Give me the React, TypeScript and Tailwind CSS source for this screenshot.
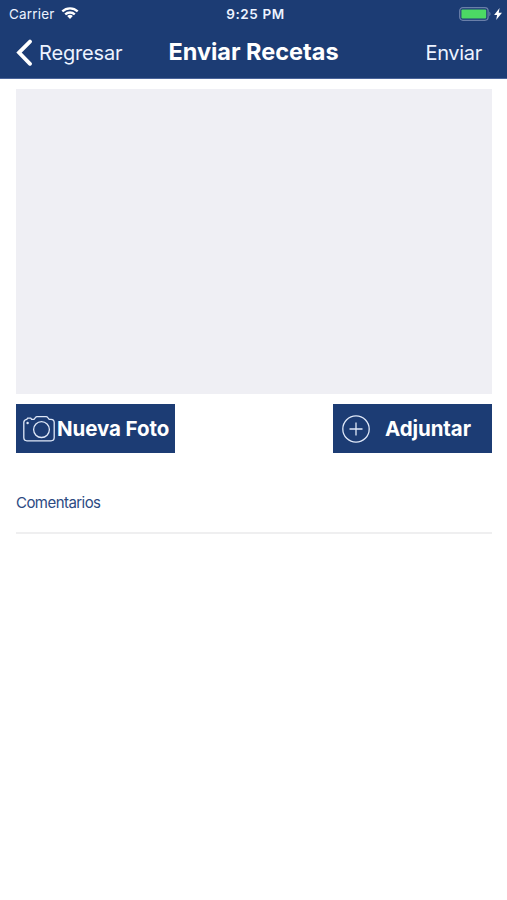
import type { ReactNode } from 'react'

const WifiIcon = () => (
  <svg width="18" height="14" viewBox="0 0 18 14" fill="none" stroke="#fff" strokeWidth="2.3">
    <path d="M1.3 4.4a11.2 11.2 0 0 1 15.4 0" />
    <path d="M4.2 7.4a7 7 0 0 1 9.6 0" />
    <path d="M9 11.9 6.2 9.1a4 4 0 0 1 5.6 0Z" fill="#fff" stroke="none" />
  </svg>
)

const BatteryIcon = () => (
  <svg width="32" height="14" viewBox="0 0 32 14" fill="none">
    <rect x="0.7" y="0.7" width="28.4" height="12.6" rx="3.2" stroke="#6a7fa9" strokeWidth="1.3" />
    <rect x="2.4" y="2.4" width="24.8" height="9.2" rx="1" fill="#4cd964" />
    <path d="M30.3 4.8c1.6.5 1.6 3.9 0 4.4Z" fill="#6a7fa9" />
  </svg>
)

const BoltIcon = () => (
  <svg width="8" height="12" viewBox="0 0 8 12" fill="#fff">
    <path d="M5.6 0 0.1 6.9h3L2.2 12 8 4.8H4.7Z" />
  </svg>
)

const BackIcon = () => (
  <svg width="17" height="28" viewBox="0 0 17 28" fill="none" stroke="#fff" strokeWidth="3.8" strokeLinecap="round">
    <path d="M14 2.6 3 13.6l11 11.2" />
  </svg>
)

const CameraIcon = () => (
  <svg width="32" height="26" viewBox="0 0 32 26" fill="none" stroke="#dfe8f8" strokeWidth="1.3" strokeLinejoin="round">
    <path d="M3.8 3.3 4.6 2.1h3.2l.8 1.2H11l1.6-1.9q.5-.7 1.4-.7h9.2q.9 0 1.4.7l1.6 1.9H28q3.2 0 3.2 3.2v15.1q0 3.2-3.2 3.2H4Q.8 24.800.8 21.600V6.500Q.8 3.600 3.800 3.300Z" />
    <circle cx="18.5" cy="13.6" r="7.9" />
    <circle cx="4.6" cy="7" r="1.2" fill="#dfe8f8" stroke="none" />
  </svg>
)

const PlusCircleIcon = () => (
  <svg width="28" height="28" viewBox="0 0 28 28" fill="none" stroke="#dfe8f8" strokeWidth="1.3">
    <circle cx="14" cy="14" r="13.2" />
    <path d="M14 7.500v13M7.500 14h13" />
  </svg>
)

const ActionButton = ({ icon, className, children }: { icon: ReactNode; className: string; children: ReactNode }) => (
  <button
    type="button"
    className={`flex h-[49px] w-[159px] items-center bg-[#1c3c74] text-[20.5px] font-bold whitespace-nowrap text-white ${className}`}
  >
    {icon}
    <span className="pt-[2px]">{children}</span>
  </button>
)

const StatusBar = () => (
  <div className="grid h-[27px] grid-cols-3 items-center pr-[5px] pl-[9px] text-[13.5px] leading-none text-[#edf3ff]">
    <div className="flex items-center gap-[6px]">
      <span className="pt-[2px] tracking-[0.2px]">Carrier</span>
      <WifiIcon />
    </div>
    <span className="pt-[2px] text-center font-semibold tracking-[0.6px]">9:25 PM</span>
    <div className="flex items-center justify-end gap-[3px]">
      <BatteryIcon />
      <BoltIcon />
    </div>
  </div>
)

export default function App() {
  return (
    <div className="min-h-[900px] w-[507px] bg-white font-['Inter',sans-serif]">
      <header className="h-[79px] border-b border-[#4b659a] bg-[#1c3c74]">
        <StatusBar />
        <div className="grid h-[51px] grid-cols-[1fr_auto_1fr] items-center pr-[25px] pl-4 text-[20px] text-[#edf3ff]">
          <button type="button" className="flex items-center gap-[6px]">
            <BackIcon />
            <span className="tracking-[-0.15px]">Regresar</span>
          </button>
          <h1 className="pb-[2px] pl-[9px] text-[23.5px] font-bold text-white">Enviar Recetas</h1>
          <button type="button" className="text-right tracking-[-0.3px]">Enviar</button>
        </div>
      </header>

      <main className="pt-[10px] pr-[15px] pl-4">
        <div className="h-[305px] bg-[#efeff4]" />
        <div className="mt-[10px] flex justify-between">
          <ActionButton icon={<CameraIcon />} className="gap-[2px] pl-[7px] tracking-[-0.08px]">Nueva Foto</ActionButton>
          <ActionButton icon={<PlusCircleIcon />} className="gap-[15px] pl-[9px] tracking-[-0.1px]">Adjuntar</ActionButton>
        </div>
        <div className="mt-10 h-[41px] border-b-2 border-[#efeff0] text-[15px] leading-[20px] tracking-[-0.55px] text-[#2c4a82]">
          Comentarios
        </div>
      </main>
    </div>
  )
}
